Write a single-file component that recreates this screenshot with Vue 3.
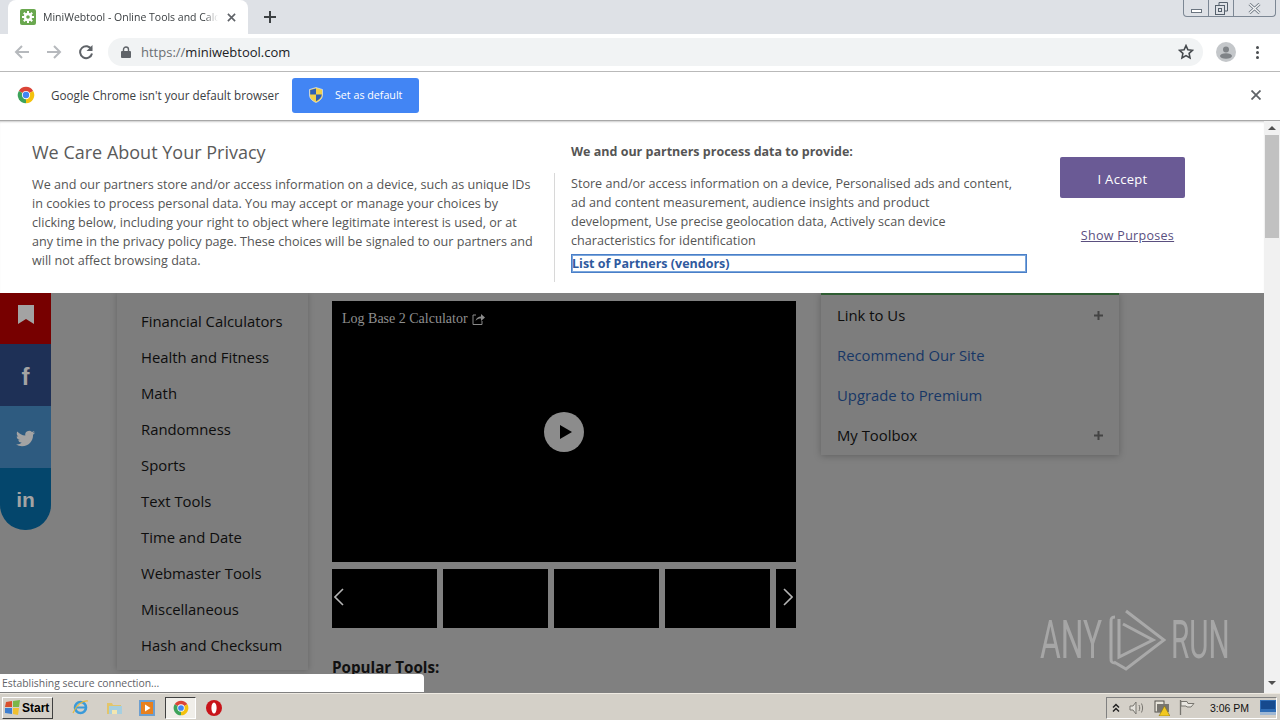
<template>
  <div class="screen">
    <div class="tabstrip">
      <div class="tab">
        <svg class="favicon" viewBox="0 0 16 16">
          <rect width="16" height="16" rx="2" fill="#6aa84f" />
          <circle cx="8" cy="8" r="3" fill="none" stroke="#fff" stroke-width="2.4" />
          <path d="M8 2v2.500M8 11.500V14M2 8h2.500M11.500 8H14M3.800 3.800l1.700 1.700M10.500 10.500l1.700 1.700M12.200 3.800l-1.700 1.700M5.500 10.500l-1.700 1.700" stroke="#fff" stroke-width="2" />
        </svg>
        <span class="tab-title">MiniWebtool - Online Tools and Calcu</span>
        <svg class="tab-close" viewBox="0 0 10 10">
          <path d="M1 1l8 8M9 1l-8 8" stroke="#5f6368" stroke-width="1.800" />
        </svg>
      </div>
      <svg class="new-tab" viewBox="0 0 12 12">
        <path d="M6 0v12M0 6h12" stroke="#3c4043" stroke-width="2" />
      </svg>
      <div class="win-controls">
        <div class="win-btn min"><span class="min-bar"></span></div>
        <div class="win-btn restore">
          <svg width="13" height="13" viewBox="0 0 13 13">
            <path d="M4 3V.5h8.500V9H10" fill="none" stroke="#55606c" />
            <rect x=".5" y="3.500" width="9" height="9" fill="none" stroke="#55606c" />
            <rect x="3.500" y="6.500" width="3" height="3" fill="none" stroke="#55606c" />
          </svg>
        </div>
        <div class="win-btn close">
          <svg width="13" height="11" viewBox="0 0 13 11">
            <path d="M1.500 1l10 9M11.500 1l-10 9" stroke="#6b7580" stroke-width="3" />
            <path d="M1.500 1l10 9M11.500 1l-10 9" stroke="#f4f5f6" stroke-width="1.400" />
          </svg>
        </div>
      </div>
    </div>

    <div class="toolbar">
      <svg class="nav-icon first" viewBox="0 0 16 16">
        <path d="M15 8H2M8 2L2 8l6 6" fill="none" stroke="#b6b9bd" stroke-width="2" />
      </svg>
      <svg class="nav-icon" viewBox="0 0 16 16">
        <path d="M1 8h13M8 2l6 6-6 6" fill="none" stroke="#b6b9bd" stroke-width="2" />
      </svg>
      <svg class="nav-icon" viewBox="0 0 16 16">
        <path d="M13.500 5.500A6 6 0 1 0 14 9.500" fill="none" stroke="#5f6368" stroke-width="2" />
        <path d="M14.500 1v6h-6z" fill="#5f6368" />
      </svg>
      <div class="omnibox">
        <svg class="lock" viewBox="0 0 10 12">
          <path d="M2.500 5V3.500a2.500 2.500 0 0 1 5 0V5" fill="none" stroke="#5f6368" stroke-width="1.400" />
          <rect y="5" width="10" height="7" rx="1" fill="#5f6368" />
        </svg>
        <span class="url"><span class="scheme">https://</span>miniwebtool.com</span>
        <svg class="star" viewBox="0 0 16 16">
          <path d="M8 1.600l1.900 4.200 4.600.5-3.400 3.100.9 4.500L8 11.600l-4 2.300.9-4.500L1.500 6.300l4.600-.5z" fill="none" stroke="#45494d" stroke-width="1.600" />
        </svg>
      </div>
      <div class="avatar">
        <svg width="20" height="20" viewBox="0 0 20 20">
          <circle cx="10" cy="10" r="10" fill="#c4c7ca" />
          <circle cx="10" cy="7.500" r="3" fill="#7f8387" />
          <ellipse cx="10" cy="14" rx="6" ry="2.800" fill="#7f8387" />
        </svg>
      </div>
      <div class="menu-dots"><i></i><i></i><i></i></div>
    </div>

    <div class="infobar">
      <svg class="chrome-logo" viewBox="0 0 24 24">
        <path d="M12 12L2.470 6.500A11 11 0 0 1 21.530 6.500z" fill="#db4437" />
        <path d="M12 12l9.530-5.500A11 11 0 0 1 12 23z" fill="#f4c20d" />
        <path d="M12 12v11A11 11 0 0 1 2.470 6.500z" fill="#3da35a" />
        <circle cx="12" cy="12" r="5.500" fill="#fff" />
        <circle cx="12" cy="12" r="4.300" fill="#4285f4" />
      </svg>
      <span class="info-text">Google Chrome isn't your default browser</span>
      <div class="default-btn">
        <svg class="shield" viewBox="0 0 14 16">
          <path d="M7 .5l6.500 2V8c0 3.500-3 6-6.500 7.500C3.500 14 .5 11.500.5 8V2.500z" fill="#f2d04a" stroke="#e9eef8" stroke-width=".6" />
          <path d="M7 1.500v6H1.200V3zM7 7.500h5.800c-.2 3-2.800 5.400-5.800 6.800z" fill="#2f5fb3" />
        </svg>
        <span>Set as default</span>
      </div>
      <svg class="info-close" viewBox="0 0 10 10">
        <path d="M.5.500l9 9M9.500.500l-9 9" stroke="#5f6368" stroke-width="1.800" />
      </svg>
    </div>

    <div class="viewport">
      <div class="content">
        <div class="consent">
          <div class="consent-left">
            <h2>We Care About Your Privacy</h2>
            <p>
              We and our partners store and/or access information on a device, such as unique IDs<br />
              in cookies to process personal data. You may accept or manage your choices by<br />
              clicking below, including your right to object where legitimate interest is used, or at<br />
              any time in the privacy policy page. These choices will be signaled to our partners and<br />
              will not affect browsing data.
            </p>
          </div>
          <div class="consent-mid">
            <h3>We and our partners process data to provide:</h3>
            <p>
              Store and/or access information on a device, Personalised ads and content,<br />
              ad and content measurement, audience insights and product<br />
              development, Use precise geolocation data, Actively scan device<br />
              characteristics for identification
            </p>
            <div class="vendors">List of Partners (vendors)</div>
          </div>
          <div class="consent-right">
            <div class="accept">I Accept</div>
            <div class="purposes">Show Purposes</div>
          </div>
        </div>

        <div class="page">
          <div class="social">
            <div class="soc red">
              <svg width="16" height="19" viewBox="0 0 16 19"><path d="M0 0h16v19l-8-5-8 5z" fill="#a3a3a3" /></svg>
            </div>
            <div class="soc fb">f</div>
            <div class="soc tw">
              <svg width="19" height="19" viewBox="0 0 24 24"><path d="M23.953 4.570a10 10 0 01-2.825.775 4.958 4.958 0 002.163-2.723c-.951.555-2.005.959-3.127 1.184a4.920 4.920 0 00-8.384 4.482C7.690 8.095 4.067 6.130 1.640 3.162a4.822 4.822 0 00-.666 2.475c0 1.710.870 3.213 2.188 4.096a4.904 4.904 0 01-2.228-.616v.060a4.923 4.923 0 003.946 4.827 4.996 4.996 0 01-2.212.085 4.936 4.936 0 004.604 3.417 9.867 9.867 0 01-6.102 2.105c-.390 0-.779-.023-1.170-.067a13.995 13.995 0 007.557 2.209c9.053 0 13.998-7.496 13.998-13.985 0-.210 0-.420-.015-.630A9.935 9.935 0 0024 4.590z" fill="#a3a3a3" /></svg>
            </div>
            <div class="soc li">in</div>
          </div>

          <div class="sidebar">
            <div v-for="c in categories" :key="c" class="side-item">{{ c }}</div>
          </div>

          <div class="main">
            <div class="video">
              <div class="video-title">
                <span>Log Base 2 Calculator</span>
                <svg width="13" height="12" viewBox="0 0 13 12">
                  <path d="M4 2H1v9.500h9V8" fill="none" stroke="#8a8a8a" />
                  <path d="M3.500 8c.5-3 3-4.500 5.500-4.500V1l4 3.500L9 8V5.500C7 5.500 5 6 3.500 8z" fill="#8a8a8a" />
                </svg>
              </div>
              <div class="play">
                <svg width="14" height="16" viewBox="0 0 14 16"><path d="M1 1l12 7-12 7z" fill="#000" /></svg>
              </div>
            </div>
            <div class="thumbs">
              <div v-for="n in 5" :key="n" class="thumb"></div>
              <svg class="arrow left" width="10" height="18" viewBox="0 0 10 18"><path d="M9 1L1 9l8 8" fill="none" stroke="#b4b4b4" stroke-width="1.600" /></svg>
              <svg class="arrow right" width="10" height="18" viewBox="0 0 10 18"><path d="M1 1l8 8-8 8" fill="none" stroke="#b4b4b4" stroke-width="1.600" /></svg>
            </div>
            <div class="popular">Popular Tools:</div>
          </div>

          <div class="rightcol">
            <div v-for="r in sideLinks" :key="r.label" class="right-item" :class="{ link: r.link }">
              <span>{{ r.label }}</span>
              <svg v-if="!r.link" width="9" height="9" viewBox="0 0 9 9"><path d="M4.500 0v9M0 4.500h9" stroke="#444" stroke-width="2" /></svg>
            </div>
          </div>

          <div class="watermark">
            <span class="wm-text any">ANY</span>
            <svg class="wm-logo" width="60" height="62" viewBox="0 0 60 62">
              <path d="M9 8C5 8 5 10 5 13v36c0 3 0 5 4 5" fill="none" stroke="#a9a9a9" stroke-width="3" />
              <path d="M13 10V48L47 31 17 15" fill="none" stroke="#a9a9a9" stroke-width="3" />
              <path d="M20 2L58 31 20 60 8 53" fill="none" stroke="#a9a9a9" stroke-width="3" />
            </svg>
            <span class="wm-text run">RUN</span>
          </div>

          <div class="status">Establishing secure connection...</div>
        </div>
      </div>

      <div class="scrollbar">
        <div class="sb-btn"><span class="tri up"></span></div>
        <div class="sb-thumb"></div>
        <div class="sb-track"></div>
        <div class="sb-btn last"><span class="tri down"></span></div>
      </div>
    </div>

    <div class="taskbar">
      <div class="start">
        <svg width="16" height="15" viewBox="0 0 16 15">
          <path d="M1 2l6-1v6H0z" fill="#d9502e" />
          <path d="M8 1l7-1-1 7H8z" fill="#7ab648" />
          <path d="M0 8h7v6l-7-1z" fill="#3f7fd0" />
          <path d="M8 8h6l-1 7-5-1z" fill="#f0c030" />
        </svg>
        <span>Start</span>
      </div>
      <div class="quick">
        <svg class="q" width="17" height="17" viewBox="0 0 17 17">
          <circle cx="8.500" cy="8.500" r="5.500" fill="none" stroke="#3a9ad9" stroke-width="2.600" />
          <path d="M3 8.500h11" stroke="#3a9ad9" stroke-width="2" />
          <path d="M1 14C4 6 11 1 16 2" fill="none" stroke="#e8b93a" stroke-width="1.200" />
        </svg>
        <svg class="q" width="16" height="16" viewBox="0 0 16 16">
          <path d="M1 3h5l1 2h8v9H1z" fill="#e3c56a" />
          <path d="M3 6h13v8H3z" fill="#a6cfe0" />
          <path d="M6 10h5v4H6z" fill="#f3e6b0" />
        </svg>
        <svg class="q" width="16" height="16" viewBox="0 0 16 16">
          <rect width="16" height="16" fill="#6d9fd0" />
          <rect x="2" y="2" width="12" height="12" fill="#e8801e" />
          <path d="M6 4.500L11.500 8 6 11.500z" fill="#fff" />
        </svg>
        <div class="chrome-task">
          <svg width="16" height="16" viewBox="0 0 24 24">
            <path d="M12 12L2.470 6.500A11 11 0 0 1 21.530 6.500z" fill="#db4437" />
            <path d="M12 12l9.530-5.500A11 11 0 0 1 12 23z" fill="#f4c20d" />
            <path d="M12 12v11A11 11 0 0 1 2.470 6.500z" fill="#3da35a" />
            <circle cx="12" cy="12" r="5.500" fill="#fff" />
            <circle cx="12" cy="12" r="4.300" fill="#4285f4" />
          </svg>
        </div>
        <svg class="q opera" width="16" height="16" viewBox="0 0 16 16">
          <circle cx="8" cy="8" r="8" fill="#c8141a" />
          <ellipse cx="8" cy="8" rx="2.600" ry="5.500" fill="#fff" />
        </svg>
      </div>
      <div class="tray">
        <svg width="8" height="10" viewBox="0 0 8 10"><path d="M1 4.500l3-3 3 3M1 8.500l3-3 3 3" fill="none" stroke="#222" stroke-width="1.500" /></svg>
        <svg width="16" height="14" viewBox="0 0 16 14">
          <path d="M1 5h3l3-4v12L4 9H1z" fill="#e4e2dc" stroke="#77756f" />
          <path d="M10 4c1 2 1 4 0 6M12.500 2.500c1.500 3 1.500 6 0 9" fill="none" stroke="#77756f" />
        </svg>
        <svg width="16" height="16" viewBox="0 0 16 16">
          <rect x="1" y="1" width="9" height="11" fill="#e9e6dc" stroke="#55534d" />
          <rect x="3" y="4" width="12" height="8" fill="#77756f" />
          <path d="M10.500 6L16 16H5z" fill="#f2c81e" stroke="#8a7410" stroke-width=".6" />
        </svg>
        <svg width="16" height="15" viewBox="0 0 16 15">
          <path d="M1.500 0v15" stroke="#77756f" stroke-width="1.300" />
          <path d="M2 1.500h6l1 2h6l-3 3.500H8L7 6H2z" fill="#e8e6e0" stroke="#77756f" />
        </svg>
        <span class="clock">3:06 PM</span>
        <svg class="desk" width="16" height="15" viewBox="0 0 16 15">
          <rect width="16" height="12" fill="#2f6db5" />
          <rect x="1" y="1" width="14" height="8" fill="#164a8e" />
          <rect y="12" width="16" height="3" fill="#9fb8d4" />
        </svg>
      </div>
    </div>
  </div>
</template>

<script setup>
const categories = [
  'Financial Calculators',
  'Health and Fitness',
  'Math',
  'Randomness',
  'Sports',
  'Text Tools',
  'Time and Date',
  'Webmaster Tools',
  'Miscellaneous',
  'Hash and Checksum'
]

const sideLinks = [
  { label: 'Link to Us', link: false },
  { label: 'Recommend Our Site', link: true },
  { label: 'Upgrade to Premium', link: true },
  { label: 'My Toolbox', link: false }
]
</script>

<style>
html,
body {
  margin: 0;
  overflow: hidden;
}
</style>

<style scoped>
.screen {
  width: 1280px;
  height: 720px;
  display: flex;
  flex-direction: column;
  overflow: hidden;
  font-family: "Open Sans", "Noto Sans", sans-serif;
  background: #fff;
}

/* browser chrome */
.tabstrip {
  height: 34px;
  flex: none;
  display: flex;
  align-items: flex-end;
  background: #dee1e6;
  padding-left: 8px;
}
.tab {
  width: 240px;
  height: 34px;
  box-sizing: border-box;
  background: #fff;
  border-radius: 8px 8px 0 0;
  display: flex;
  align-items: center;
  padding-left: 12px;
  position: relative;
}
.favicon {
  width: 16px;
  height: 16px;
  flex: none;
}
.tab-title {
  margin-left: 7px;
  width: 175px;
  font-size: 10.5px;
  color: #3c4043;
  white-space: nowrap;
  -webkit-mask-image: linear-gradient(to right, #000 92%, transparent);
  mask-image: linear-gradient(to right, #000 92%, transparent);
}
.tab-close {
  width: 9px;
  height: 9px;
  margin-left: 9px;
}
.new-tab {
  width: 12px;
  height: 12px;
  margin: 0 0 11px 16px;
}
.win-controls {
  margin-left: auto;
  margin-right: 4px;
  align-self: flex-start;
  display: flex;
  height: 16px;
  border: 1px solid #7c8794;
  border-top: none;
  border-radius: 0 0 4px 4px;
}
.win-btn {
  display: flex;
  align-items: center;
  justify-content: center;
  border-right: 1px solid #7c8794;
}
.win-btn.min {
  width: 24px;
}
.min-bar {
  width: 11px;
  height: 4px;
  margin-top: 5px;
  background: #fff;
  border: 1px solid #6b7580;
  box-sizing: border-box;
}
.win-btn.restore {
  width: 24px;
}
.win-btn.close {
  width: 41px;
  border-right: none;
}
.toolbar {
  height: 37px;
  flex: none;
  box-sizing: border-box;
  padding-bottom: 1px;
  display: flex;
  align-items: center;
  background: #fff;
  position: relative;
}
.nav-icon {
  width: 16px;
  height: 16px;
  margin-right: 16px;
}
.nav-icon.first {
  margin-left: 14px;
}
.omnibox {
  width: 1095px;
  height: 28px;
  margin-left: -2px;
  border-radius: 14px;
  background: #f1f3f4;
  display: flex;
  align-items: center;
  padding-left: 13px;
  box-sizing: border-box;
}
.lock {
  width: 10px;
  height: 12px;
}
.url {
  margin-left: 10px;
  font-size: 13px;
  color: #202124;
}
.scheme {
  color: #6b6f73;
}
.star {
  width: 16px;
  height: 16px;
  margin-left: auto;
  margin-right: 9px;
}
.avatar {
  margin-left: 13px;
  height: 20px;
}
.menu-dots {
  margin-left: 20px;
  display: flex;
  flex-direction: column;
  gap: 2px;
}
.menu-dots i {
  width: 3px;
  height: 3px;
  background: #4a4d50;
  border-radius: 50%;
}

.infobar {
  height: 50px;
  flex: none;
  box-sizing: border-box;
  border-top: 1px solid #b9b9b9;
  border-bottom: 1px solid #a8a8a8;
  display: flex;
  align-items: center;
  padding: 0 0 2px 17px;
  background: #fff;
}
.chrome-logo {
  width: 18px;
  height: 18px;
}
.info-text {
  margin-left: 16px;
  font-size: 11.7px;
  color: #3c4043;
  width: 241px;
  white-space: nowrap;
}
.default-btn {
  width: 127px;
  height: 35px;
  box-sizing: border-box;
  background: #4285f4;
  border-radius: 3px;
  display: flex;
  align-items: center;
  padding-left: 17px;
  color: #fff;
  font-size: 10.7px;
}
.shield {
  width: 14px;
  height: 16px;
  margin-right: 12px;
}
.info-close {
  width: 10px;
  height: 10px;
  margin-left: 832px;
}

.viewport {
  flex: 1;
  min-height: 0;
  display: flex;
}
.content {
  flex: 1;
  min-width: 0;
  display: flex;
  flex-direction: column;
  position: relative;
}

/* cookie banner */
.consent {
  height: 172px;
  flex: none;
  box-sizing: border-box;
  display: flex;
  background: #fff;
  color: #555;
  font-size: 12.6px;
  box-shadow: inset 0 2px 2px -1px #ccc;
}
.consent p {
  margin: 0;
  line-height: 19px;
}
.consent-left {
  width: 523px;
  padding: 20px 0 0 32px;
  box-sizing: content-box;
}
.consent-left h2 {
  margin: 0 0 12px;
  font-size: 18px;
  line-height: 22px;
  font-weight: 500;
  color: #5a5a5a;
}
.consent-left p {
  width: 510px;
  white-space: nowrap;
}
.consent-mid {
  width: 456px;
  margin-top: 52px;
  height: 109px;
  border-left: 1px solid #d8d8d8;
  padding-left: 16px;
  margin-left: -1px;
  position: relative;
}
.consent-mid h3 {
  position: absolute;
  top: -30px;
  left: 16px;
  margin: 0;
  font-size: 12.5px;
  line-height: 18px;
  font-weight: 700;
  color: #555;
  white-space: nowrap;
}
.consent-mid p {
  margin-top: 1px;
  white-space: nowrap;
}
.vendors {
  margin-top: 4px;
  height: 19px;
  line-height: 18px;
  box-sizing: border-box;
  border: 1px solid #4a7fc8;
  outline: 1px solid #7aa6dc;
  outline-offset: -2px;
  font-size: 12.5px;
  font-weight: 700;
  color: #2f5a9e;
  white-space: nowrap;
}
.consent-right {
  margin-left: 33px;
  padding-top: 36px;
  width: 125px;
  display: flex;
  flex-direction: column;
  align-items: center;
}
.accept {
  width: 125px;
  height: 41px;
  background: #6a5a95;
  border-radius: 2px;
  color: #fff;
  font-size: 13px;
  line-height: 45px;
  text-align: center;
  letter-spacing: 0.3px;
}
.purposes {
  margin: 29px 0 0 10px;
  font-size: 12.5px;
  color: #5a4f7f;
  text-decoration: underline;
  letter-spacing: 0.3px;
  white-space: nowrap;
}

/* dimmed page behind the banner */
.page {
  flex: 1;
  min-height: 0;
  display: flex;
  align-items: flex-start;
  overflow: hidden;
  background: #808080;
  position: relative;
}
.social {
  width: 51px;
  flex: none;
  display: flex;
  flex-direction: column;
  border-radius: 0 0 25px 25px;
  overflow: hidden;
}
.soc {
  height: 62px;
  box-sizing: border-box;
  display: flex;
  align-items: center;
  justify-content: center;
  color: #a3a3a3;
  font-weight: 700;
}
.soc.red {
  height: 51px;
  background: #770000;
  padding-bottom: 8px;
}
.soc.fb {
  background: #1e3056;
  font-family: "Liberation Sans", sans-serif;
  font-size: 24px;
  padding-top: 4px;
}
.soc.tw {
  background: #2e5b80;
  padding-top: 2px;
}
.soc.li {
  background: #04466c;
  font-family: "Liberation Sans", sans-serif;
  font-size: 21px;
  padding-top: 2px;
}
.sidebar {
  width: 191px;
  height: 377px;
  flex: none;
  box-sizing: border-box;
  margin-left: 66px;
  padding: 10px 0 0 24px;
  background: #7d7d7d;
  box-shadow: 0 0 6px rgba(0, 0, 0, 0.22);
}
.side-item {
  height: 36px;
  line-height: 36px;
  font-size: 14.85px;
  color: #0d0d0d;
  white-space: nowrap;
}
.main {
  width: 464px;
  flex: none;
  margin-left: 24px;
  padding-top: 8px;
}
.video {
  height: 261px;
  background: #000;
  display: flex;
  align-items: center;
  justify-content: center;
  position: relative;
}
.video-title {
  position: absolute;
  top: 10px;
  left: 10px;
  display: flex;
  align-items: center;
  gap: 4px;
  font-family: "Liberation Serif", serif;
  font-size: 14px;
  color: #8f8f8f;
}
.play {
  width: 40px;
  height: 40px;
  border-radius: 50%;
  background: #8c8c8c;
  display: flex;
  align-items: center;
  justify-content: center;
  padding-left: 3px;
  box-sizing: border-box;
}
.thumbs {
  margin-top: 7px;
  height: 59px;
  display: flex;
  gap: 6px;
  overflow: hidden;
  position: relative;
}
.thumb {
  width: 105px;
  flex: none;
  background: #000;
}
.arrow {
  position: absolute;
  top: 19px;
}
.arrow.left {
  left: 2px;
}
.arrow.right {
  right: 3px;
}
.popular {
  margin-top: 28px;
  font-size: 15.2px;
  line-height: 22px;
  font-weight: 700;
  color: #111;
}
.rightcol {
  width: 298px;
  flex: none;
  box-sizing: border-box;
  margin-left: 25px;
  height: 162px;
  border-top: 2px solid #2f5d33;
  background: #7d7d7d;
  box-shadow: 0 1px 7px rgba(0, 0, 0, 0.25);
}
.right-item {
  height: 40px;
  padding: 0 16px;
  display: flex;
  align-items: center;
  justify-content: space-between;
  font-size: 14.85px;
  color: #0d0d0d;
}
.right-item.link {
  color: #173766;
}
.watermark {
  position: absolute;
  left: 1040px;
  top: 316px;
  display: flex;
  align-items: center;
  color: #a6a6a6;
}
.wm-text {
  font-family: "Roboto", sans-serif;
  font-weight: 400;
  font-size: 53px;
  line-height: 62px;
  transform: scaleX(0.6);
  transform-origin: left center;
  width: 62px;
}
.wm-text.run {
  margin-left: 5px;
  transform: scaleX(0.56);
}
.wm-logo {
  margin-left: 4px;
}
.status {
  position: absolute;
  left: 0;
  bottom: 1px;
  width: 424px;
  height: 18px;
  box-sizing: border-box;
  background: #fff;
  border-radius: 0 4px 0 0;
  padding-left: 2px;
  font-size: 10.4px;
  line-height: 18px;
  color: #5f6368;
}

.scrollbar {
  width: 16px;
  flex: none;
  display: flex;
  flex-direction: column;
  background: #f1f1f1;
  position: relative;
}
.sb-btn {
  height: 14px;
  flex: none;
  display: flex;
  align-items: center;
  justify-content: center;
}
.sb-btn.last {
  margin-bottom: 3px;
}
.tri {
  width: 0;
  height: 0;
  border-left: 4px solid transparent;
  border-right: 4px solid transparent;
}
.tri.up {
  border-bottom: 4px solid #505050;
}
.tri.down {
  border-top: 4px solid #505050;
}
.sb-thumb {
  height: 103px;
  flex: none;
  background: #c1c1c1;
  margin: 0 1px;
}
.sb-track {
  flex: 1;
}

/* windows taskbar */
.taskbar {
  height: 27px;
  flex: none;
  display: flex;
  align-items: center;
  background: #d4d0c8;
  border-top: 1px solid #eeeae2;
  box-sizing: border-box;
  padding: 1px 3px 0 2px;
}
.start {
  width: 51px;
  height: 22px;
  box-sizing: border-box;
  display: flex;
  align-items: center;
  gap: 1px;
  padding-left: 2px;
  border: 1px solid;
  border-color: #fff #404040 #404040 #fff;
  font-family: "Liberation Sans", sans-serif;
  font-size: 12px;
  font-weight: 700;
  color: #000;
}
.quick {
  display: flex;
  align-items: center;
  margin-left: 19px;
}
.q {
  margin-right: 17px;
  flex: none;
}
.chrome-task {
  width: 31px;
  height: 22px;
  box-sizing: border-box;
  margin-left: -7px;
  border: 1px solid;
  border-color: #404040 #fff #fff #404040;
  background: #f0eee9;
  display: flex;
  align-items: center;
  justify-content: center;
}
.q.opera {
  margin-left: 10px;
}
.tray {
  margin-left: auto;
  width: 171px;
  height: 22px;
  box-sizing: border-box;
  display: flex;
  align-items: center;
  gap: 9px;
  padding-left: 5px;
  border: 1px solid;
  border-color: #808080 #fff #fff #808080;
  font-family: "Liberation Sans", sans-serif;
  font-size: 10.5px;
  color: #111;
}
.clock {
  margin-left: 6px;
  white-space: nowrap;
}
.desk {
  margin-left: 2px;
  flex: none;
}
</style>
